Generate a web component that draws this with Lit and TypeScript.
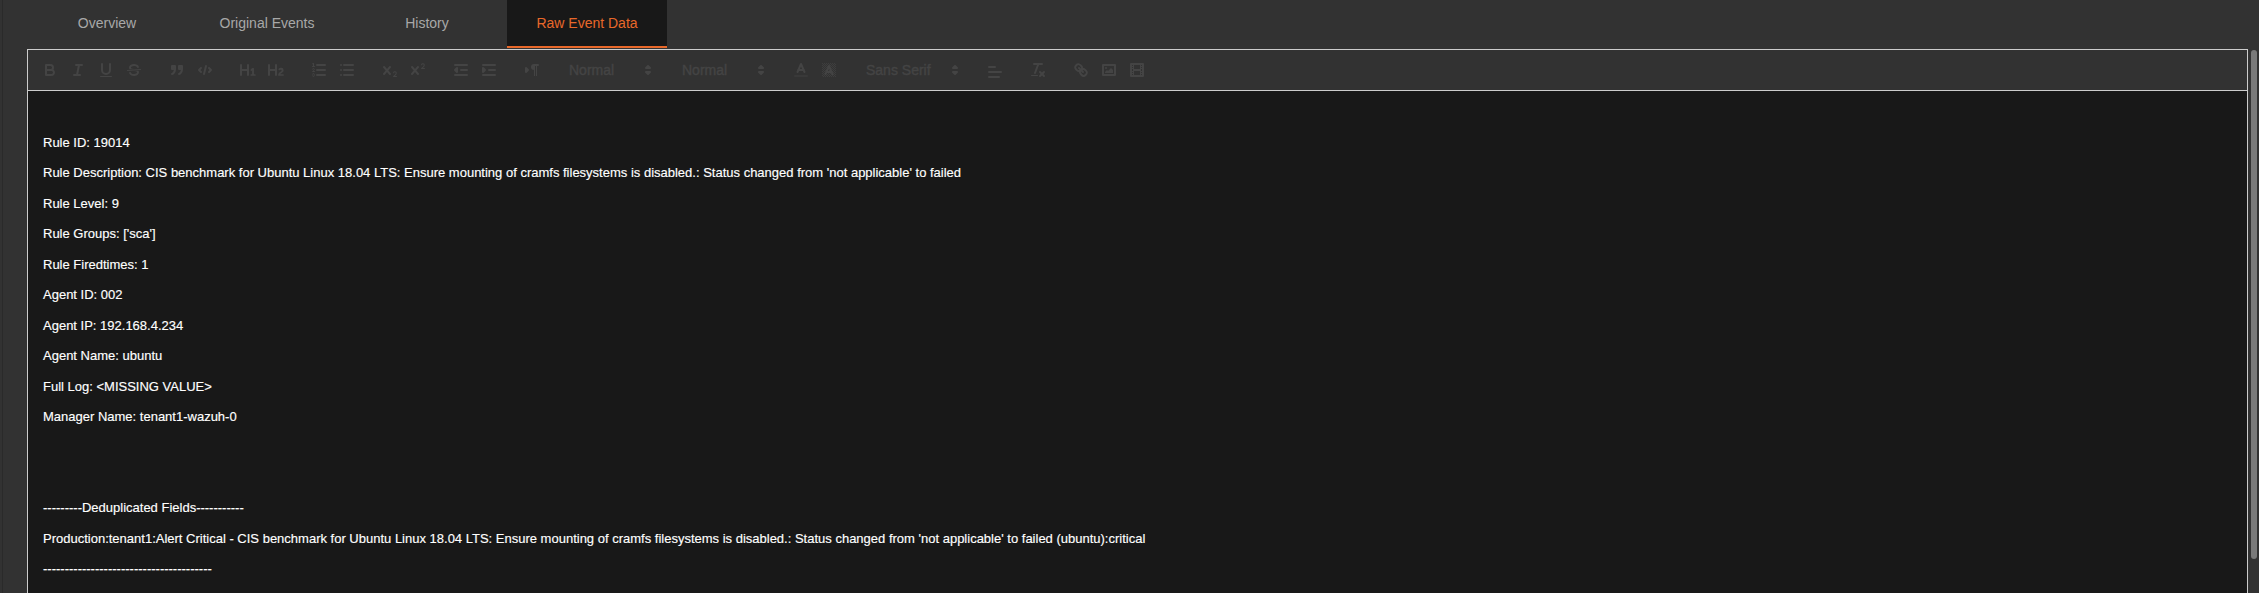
import { LitElement, html, css, svg } from "lit";
import { customElement, state } from "lit/decorators.js";

const rects = (list: number[][]) =>
  list.map(([x, y, w, h]) => svg`<rect class="f" x=${x} y=${y} width=${w} height=${h} />`);

const checker: number[][] = [];
for (let y = 2; y < 16; y++) {
  for (let x = 2; x < 16; x++) {
    if ((x + y) % 2 === 0) checker.push([x, y, 1, 1]);
  }
}

const icons: Record<string, unknown> = {
  bold: svg`<path class="s" d="M5,4H9.5A2.5,2.5,0,0,1,12,6.5v0A2.5,2.5,0,0,1,9.5,9H5A0,0,0,0,1,5,9V4A0,0,0,0,1,5,4Z"/><path class="s" d="M5,9h5.5A2.5,2.5,0,0,1,13,11.5v0A2.5,2.5,0,0,1,10.5,14H5a0,0,0,0,1,0,0V9A0,0,0,0,1,5,9Z"/>`,
  italic: svg`<line class="s" x1="7" x2="13" y1="4" y2="4"/><line class="s" x1="5" x2="11" y1="14" y2="14"/><line class="s" x1="8" x2="10" y1="14" y2="4"/>`,
  underline: svg`<path class="s" d="M5,3V9a4.012,4.012,0,0,0,4,4H9a4.012,4.012,0,0,0,4-4V3"/><rect class="f" height="1" rx="0.5" ry="0.5" width="12" x="3" y="15"/>`,
  strike: svg`<line class="s t" x1="15.5" x2="2.5" y1="8.5" y2="9.5"/><path class="f" d="M9.007,8C6.542,7.791,6,7.519,6,6.5,6,5.792,7.283,5,9,5c1.571,0,2.765.679,2.969,1.309a1,1,0,0,0,1.9-.617C13.356,4.106,11.354,3,9,3,6.2,3,4,4.538,4,6.5a3.2,3.2,0,0,0,.5,1.843Z"/><path class="f" d="M8.984,10C11.457,10.208,12,10.479,12,11.5c0,.708-1.283,1.5-3,1.5-1.571,0-2.765-.679-2.969-1.309a1,1,0,1,0-1.9.617C4.644,13.894,6.646,15,9,15c2.8,0,5-1.538,5-3.5a3.2,3.2,0,0,0-.5-1.843Z"/>`,
  quote: svg`<rect class="f s" height="3" width="3" x="4" y="5"/><rect class="f s" height="3" width="3" x="11" y="5"/><path class="f s" d="M7,8c0,4.031-3,5-3,5"/><path class="f s" d="M14,8c0,4.031-3,5-3,5"/>`,
  code: svg`<polyline class="s" points="5 7 3 9 5 11"/><polyline class="s" points="13 7 15 9 13 11"/><line class="s" x1="10" x2="8" y1="5" y2="13"/>`,
  h1: svg`<path class="f" d="M10,4V14a1,1,0,0,1-2,0V10H3v4a1,1,0,0,1-2,0V4A1,1,0,0,1,3,4V8H8V4a1,1,0,0,1,2,0Zm6.06787,9.209H14.98975V7.59863a.54085.54085,0,0,0-.605-.60547h-.62744a1.01119,1.01119,0,0,0-.748.29688L11.645,8.56641a.5435.5435,0,0,0-.022.8584l.28613.30762a.53861.53861,0,0,0,.84717.0332l.09912-.08789a1.2137,1.2137,0,0,0,.2417-.35254h.02246s-.01123.30859-.01123.60547V13.209H12.041a.54085.54085,0,0,0-.605.60547v.43945a.54085.54085,0,0,0,.605.60547h4.02686a.54085.54085,0,0,0,.605-.60547v-.43945A.54085.54085,0,0,0,16.06787,13.209Z"/>`,
  h2: svg`<path class="f" d="M16.73975,13.81445v.43945a.54085.54085,0,0,1-.605.60547H11.855a.58392.58392,0,0,1-.64893-.60547V14.0127c0-2.90527,3.39941-3.42187,3.39941-4.55469a.77675.77675,0,0,0-.84717-.78125,1.17684,1.17684,0,0,0-.83594.38477c-.2749.26367-.561.374-.85791.13184l-.4292-.34082c-.30811-.24219-.38525-.51758-.1543-.81445a2.97155,2.97155,0,0,1,2.45361-1.17676,2.45393,2.45393,0,0,1,2.68408,2.40918c0,2.45312-3.1792,2.92676-3.27832,3.93848h2.79443A.54085.54085,0,0,1,16.73975,13.81445ZM9,3A.99974.99974,0,0,0,8,4V8H3V4A1,1,0,0,0,1,4V14a1,1,0,0,0,2,0V10H8v4a1,1,0,0,0,2,0V4A.99974.99974,0,0,0,9,3Z"/>`,
  ol: svg`<line class="s" x1="7" x2="15" y1="4" y2="4"/><line class="s" x1="7" x2="15" y1="9" y2="9"/><line class="s" x1="7" x2="15" y1="14" y2="14"/><line class="s t" x1="2.5" x2="4.5" y1="5.5" y2="5.5"/><path class="f" d="M3.5,6A0.5,0.5,0,0,1,3,5.5V3.085l-0.276.138A0.5,0.5,0,0,1,2.053,3c-0.124-.247-0.023-0.324.224-0.447l1-.5A0.5,0.5,0,0,1,4,2.5v3A0.5,0.5,0,0,1,3.5,6Z"/><path class="s t" d="M4.5,10.5h-2c0-.234,1.85-1.076,1.85-2.234A0.959,0.959,0,0,0,2.5,8.156"/><path class="s t" d="M2.5,14.846a0.959,0.959,0,0,0,1.85-.109A0.7,0.7,0,0,0,3.75,14a0.688,0.688,0,0,0,.6-0.736,0.959,0.959,0,0,0-1.85-.109"/>`,
  ul: svg`<line class="s" x1="6" x2="15" y1="4" y2="4"/><line class="s" x1="6" x2="15" y1="9" y2="9"/><line class="s" x1="6" x2="15" y1="14" y2="14"/><line class="s" x1="3" x2="3" y1="4" y2="4"/><line class="s" x1="3" x2="3" y1="9" y2="9"/><line class="s" x1="3" x2="3" y1="14" y2="14"/>`,
  sub: svg`<path class="f" d="M15.5,15H13.861a3.858,3.858,0,0,0,1.914-2.975,1.8,1.8,0,0,0-1.6-1.751A1.921,1.921,0,0,0,12.021,11.7a0.50013,0.50013,0,1,0,.957.291h0a0.914,0.914,0,0,1,1.053-.725,0.81,0.81,0,0,1,.744.762c0,1.076-1.16971,1.86982-1.93971,2.43082A1.45639,1.45639,0,0,0,12,15.5a0.5,0.5,0,0,0,.5.5h3A0.5,0.5,0,0,0,15.5,15Z"/><path class="f" d="M9.65,5.241a1,1,0,0,0-1.409.108L6,7.964,3.759,5.349A1,1,0,0,0,2.192,6.59178Q2.21541,6.6213,2.241,6.649L4.684,9.5,2.241,12.35A1,1,0,0,0,3.71,13.70722q0.02557-.02768.049-0.05722L6,11.036,8.241,13.65a1,1,0,1,0,1.567-1.24277Q9.78459,12.3777,9.759,12.35L7.316,9.5,9.759,6.651A1,1,0,0,0,9.65,5.241Z"/>`,
  sup: svg`<path class="f" d="M15.5,7H13.861a4.015,4.015,0,0,0,1.914-2.975,1.8,1.8,0,0,0-1.6-1.751A1.922,1.922,0,0,0,12.021,3.7a0.5,0.5,0,1,0,.957.291,0.917,0.917,0,0,1,1.053-.725,0.81,0.81,0,0,1,.744.762c0,1.077-1.164,1.925-1.934,2.486A1.423,1.423,0,0,0,12,7.5a0.5,0.5,0,0,0,.5.5h3A0.5,0.5,0,0,0,15.5,7Z"/><path class="f" d="M9.651,5.241a1,1,0,0,0-1.41.108L6,7.964,3.759,5.349a1,1,0,1,0-1.519,1.3L4.683,9.5,2.241,12.35a1,1,0,1,0,1.519,1.3L6,11.036,8.241,13.65a1,1,0,0,0,1.519-1.3L7.317,9.5,9.759,6.651A1,1,0,0,0,9.651,5.241Z"/>`,
  outdent: svg`<line class="s" x1="3" x2="15" y1="14" y2="14"/><line class="s" x1="3" x2="15" y1="4" y2="4"/><line class="s" x1="9" x2="15" y1="9" y2="9"/><polyline class="f s" points="5 7 5 11 3 9 5 7"/>`,
  indent: svg`<line class="s" x1="3" x2="15" y1="14" y2="14"/><line class="s" x1="3" x2="15" y1="4" y2="4"/><line class="s" x1="9" x2="15" y1="9" y2="9"/><polyline class="f s" points="3 7 3 11 5 9 3 7"/>`,
  direction: svg`<polygon class="f s" points="3 11 5 9 3 7 3 11"/><line class="f s" x1="15" x2="11" y1="4" y2="4"/><path class="f" d="M11,3a3,3,0,0,0,0,6h1V3H11Z"/><rect class="f" height="11" width="1" x="11" y="4"/><rect class="f" height="11" width="1" x="13" y="4"/>`,
  arrows: svg`<polygon class="s" points="7 11 9 13 11 11 7 11"/><polygon class="s" points="7 7 9 5 11 7 7 7"/>`,
  color: svg`<line class="s faint" x1="3" x2="15" y1="15" y2="15"/><polyline class="s" points="5.5 11 9 3 12.5 11"/><line class="s" x1="11.63" x2="6.38" y1="9" y2="9"/>`,
  background: svg`<g class="hatch">${rects(checker)}</g><polyline class="s" points="5.5 13 9 5 12.5 13"/><line class="s" x1="11.63" x2="6.38" y1="11" y2="11"/>`,
  align: svg`<line class="s" x1="3" x2="15" y1="9" y2="9"/><line class="s" x1="3" x2="13" y1="14" y2="14"/><line class="s" x1="3" x2="9" y1="4" y2="4"/>`,
  clean: svg`<line class="s" x1="5" x2="13" y1="3" y2="3"/><line class="s" x1="6" x2="9.35" y1="12" y2="3"/><line class="s" x1="11" x2="15" y1="11" y2="15"/><line class="s" x1="15" x2="11" y1="11" y2="15"/><rect class="f" height="1" rx="0.5" ry="0.5" width="7" x="2" y="14"/>`,
  link: svg`<line class="s" x1="7" x2="11" y1="7" y2="11"/><path class="s" d="M8.9,4.577a3.476,3.476,0,0,1,.36,4.679A3.476,3.476,0,0,1,4.577,8.9C3.185,7.5,2.035,6.4,4.217,4.217S7.5,3.185,8.9,4.577Z"/><path class="s" d="M13.423,9.1a3.476,3.476,0,0,0-4.679-.36,3.476,3.476,0,0,0,.36,4.679c1.392,1.392,2.5,2.542,4.679.36S14.815,10.5,13.423,9.1Z"/>`,
  image: svg`<rect class="s" height="10" width="12" x="3" y="4"/><circle class="f" cx="6" cy="7" r="1"/><polyline class="f" points="5 12 5 11 7 9 8 10 11 7 13 9 13 12 5 12"/>`,
  video: svg`<rect class="s" height="12" width="12" x="3" y="3"/>${rects([
    [5,3,1,12],[12,3,1,12],[5,8,8,2],[3,5,3,1],[3,7,3,1],[3,10,3,1],[3,12,3,1],[12,5,3,1],[12,7,3,1],[12,10,3,1],[12,12,3,1],
  ])}`,
};

type Tool = { icon: string } | { label: string; width: number };
const groups: Tool[][] = [
  [{ icon: "bold" }, { icon: "italic" }, { icon: "underline" }, { icon: "strike" }],
  [{ icon: "quote" }, { icon: "code" }],
  [{ icon: "h1" }, { icon: "h2" }],
  [{ icon: "ol" }, { icon: "ul" }],
  [{ icon: "sub" }, { icon: "sup" }],
  [{ icon: "outdent" }, { icon: "indent" }],
  [{ icon: "direction" }],
  [{ label: "Normal", width: 98 }],
  [{ label: "Normal", width: 98 }],
  [{ icon: "color" }, { icon: "background" }],
  [{ label: "Sans Serif", width: 108 }],
  [{ icon: "align" }],
  [{ icon: "clean" }],
  [{ icon: "link" }, { icon: "image" }, { icon: "video" }],
];

const desc =
  "CIS benchmark for Ubuntu Linux 18.04 LTS: Ensure mounting of cramfs filesystems is disabled.: Status changed from 'not applicable' to failed";

const lines = [
  "",
  "Rule ID: 19014",
  `Rule Description: ${desc}`,
  "Rule Level: 9",
  "Rule Groups: ['sca']",
  "Rule Firedtimes: 1",
  "Agent ID: 002",
  "Agent IP: 192.168.4.234",
  "Agent Name: ubuntu",
  "Full Log: <MISSING VALUE>",
  "Manager Name: tenant1-wazuh-0",
  "",
  "",
  "---------Deduplicated Fields-----------",
  `Production:tenant1:Alert Critical - ${desc} (ubuntu):critical`,
  "---------------------------------------",
];

@customElement("app-root")
export class AppRoot extends LitElement {
  @state() private active = "Raw Event Data";

  static styles = css`
    :host {
      display: block;
      position: relative;
      height: 593px;
      overflow: hidden;
      background: #323232;
      font-family: "Liberation Sans", Arial, sans-serif;
    }
    .edge {
      position: absolute;
      left: 2px;
      top: 0;
      bottom: 0;
      width: 1px;
      background: #2a2a2a;
    }
    .tabs {
      display: flex;
      height: 48px;
      padding-left: 27px;
    }
    .tab {
      width: 160px;
      box-sizing: border-box;
      display: flex;
      align-items: center;
      justify-content: center;
      border: 0;
      border-bottom: 2px solid transparent;
      background: none;
      padding: 0;
      font: 14px "Liberation Sans", Arial, sans-serif;
      color: #a8a8a8;
    }
    .tab.on {
      background: #181818;
      color: #e8682a;
      border-bottom-color: #e8682a;
    }
    .quill {
      margin: 1px 11px 0 27px;
    }
    .toolbar {
      display: flex;
      box-sizing: border-box;
      height: 42px;
      padding: 8px;
      border: 1px solid #ccc;
      gap: 15px;
    }
    .group {
      display: flex;
    }
    .btn {
      width: 28px;
      height: 24px;
      box-sizing: border-box;
      padding: 3px 5px;
    }
    .btn.low {
      padding-top: 5px;
    }
    .select {
      display: flex;
      align-items: center;
      justify-content: space-between;
      box-sizing: border-box;
      height: 24px;
      padding: 0 2px 0 8px;
      font-size: 14px;
      font-weight: 500;
      color: #444;
      -webkit-text-stroke: 0.4px #444;
    }
    svg {
      display: block;
      width: 18px;
      height: 18px;
    }
    .s {
      fill: none;
      stroke: #444;
      stroke-width: 2;
      stroke-linecap: round;
      stroke-linejoin: round;
    }
    .t {
      stroke-width: 1;
    }
    .f,
    .f.s {
      fill: #444;
    }
    .faint {
      opacity: 0.4;
    }
    .hatch {
      opacity: 0.7;
    }
    .editor {
      box-sizing: border-box;
      height: 520px;
      background: #181818;
      border: 1px solid #ccc;
      border-top: 0;
      padding: 12.5px 15px 12px;
      color: #fff;
      font-size: 13px;
      line-height: 18.46px;
      -webkit-text-stroke: 0.15px #fff;
    }
    .editor p {
      margin: 0 0 12px;
      min-height: 18.46px;
      white-space: pre-wrap;
    }
    .thumb {
      position: absolute;
      left: 2251px;
      top: 50px;
      width: 6px;
      height: 509px;
      border-radius: 3px;
      background: #7a7a7a;
    }
  `;

  private tool(t: Tool) {
    if ("icon" in t) {
      return html`<div class="btn ${t.icon === "align" ? "low" : ""}"><svg viewBox="0 0 18 18">${icons[t.icon]}</svg></div>`;
    }
    return html`<div class="select" style="width:${t.width}px">
      <span>${t.label}</span><svg viewBox="0 0 18 18">${icons.arrows}</svg>
    </div>`;
  }

  render() {
    return html`
      <div class="edge"></div>
      <div class="tabs">
        ${["Overview", "Original Events", "History", "Raw Event Data"].map(
          (t) => html`<button class="tab ${t === this.active ? "on" : ""}" @click=${() => (this.active = t)}>${t}</button>`
        )}
      </div>
      <div class="quill">
        <div class="toolbar">
          ${groups.map((g) => html`<div class="group">${g.map((t) => this.tool(t))}</div>`)}
        </div>
        <div class="editor">
          ${lines.map((l) => html`<p>${l}</p>`)}
        </div>
      </div>
      <div class="thumb"></div>
    `;
  }
}
